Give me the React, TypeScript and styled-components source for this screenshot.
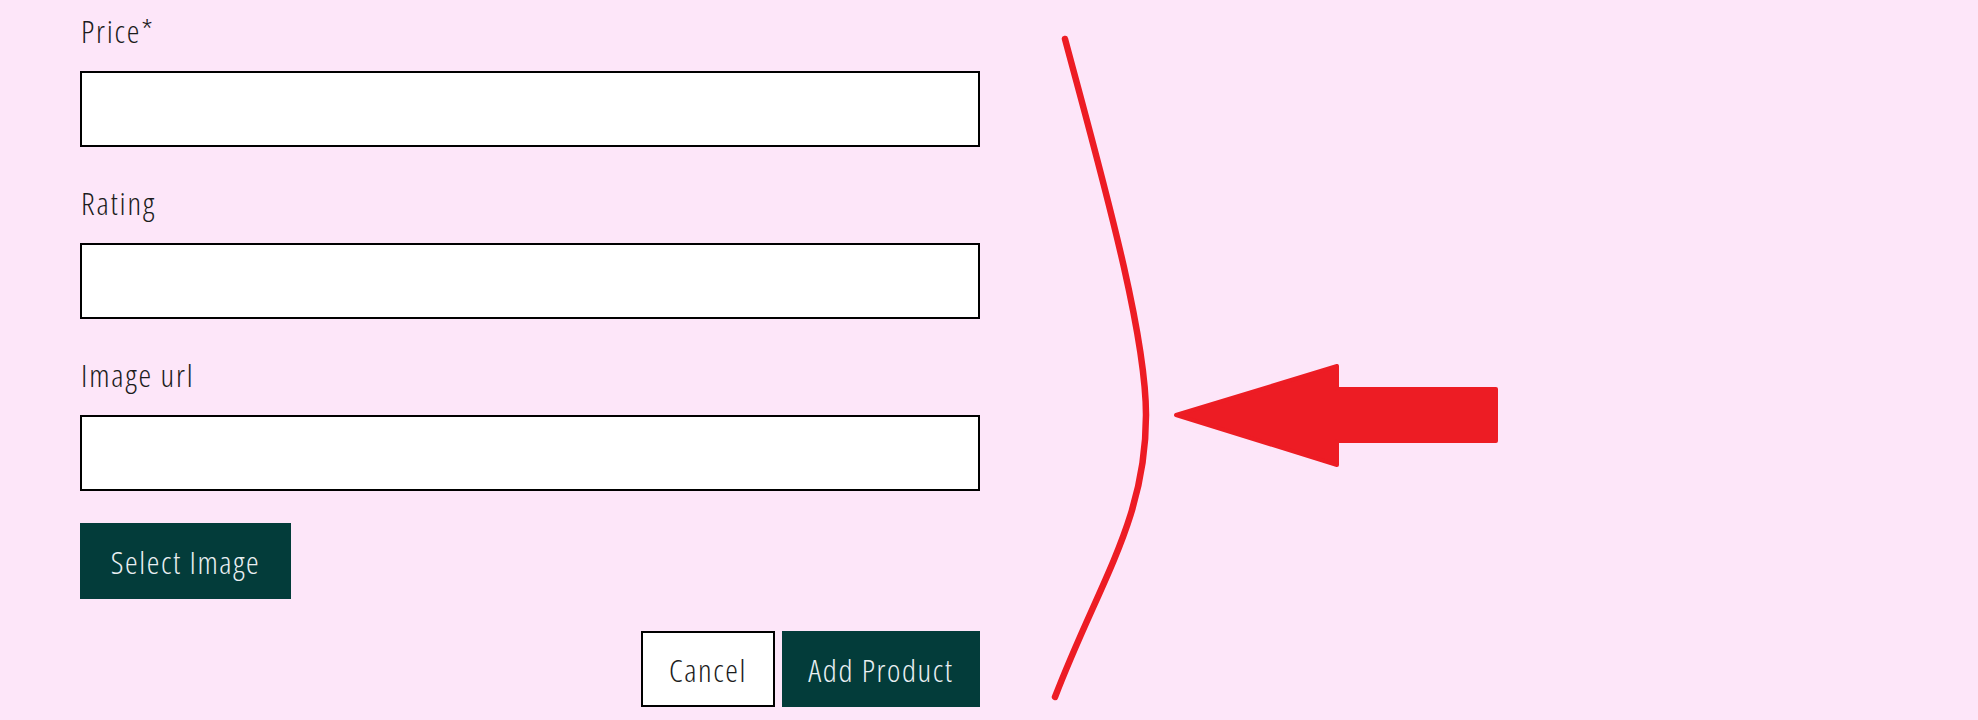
//#region Import
import React from 'react';
import styled, { createGlobalStyle } from 'styled-components';
//#endregion

// #region Styled
const GlobalStyle = createGlobalStyle`
  html, body {
    margin: 0;
    padding: 0;
    background: #fde6f9;
  }
  body {
    font-family: "Open Sans", "Liberation Sans", sans-serif;
    font-stretch: 75%;
    font-weight: 300;
  }
`;

const StyledPage = styled.div`
  display: flex;
  align-items: flex-start;
  width: 1978px;
  height: 720px;
  overflow: hidden;
  background: #fde6f9;
`;

const StyledForm = styled.form`
  display: flex;
  flex-direction: column;
  width: 900px;
  margin-left: 80px;
  padding-top: 13px;
`;

const StyledField = styled.div`
  display: flex;
  flex-direction: column;
  margin-bottom: 38px;
`;

const StyledLabel = styled.label`
  font-size: 32px;
  line-height: 36px;
  letter-spacing: 1.8px;
  color: #1c1c1c;
  margin-bottom: 22px;
  padding-left: 1px;
`;

const StyledInput = styled.input`
  box-sizing: border-box;
  width: 100%;
  height: 76px;
  border: 2px solid #000;
  background: #fff;
  font: inherit;
  font-size: 28px;
  padding: 0 12px;
  &:focus {
    outline: none;
  }
`;

const StyledButton = styled.button<{ $width: number; $variant?: 'primary' | 'outline' }>`
  box-sizing: border-box;
  display: block;
  width: ${(p) => p.$width}px;
  height: 76px;
  padding: 0;
  font-family: inherit;
  font-stretch: inherit;
  font-weight: inherit;
  font-size: 32px;
  letter-spacing: 1.6px;
  cursor: pointer;
  border: ${(p) => (p.$variant === 'outline' ? '2px solid #000' : 'none')};
  background: ${(p) => (p.$variant === 'outline' ? '#fff' : '#033c3a')};
  color: ${(p) => (p.$variant === 'outline' ? '#1c1c1c' : '#e9eff2')};
`;

const StyledUploadRow = styled.div`
  display: flex;
  margin-top: -6px;
`;

const StyledFooter = styled.div`
  display: flex;
  justify-content: flex-end;
  gap: 7px;
  margin-top: 32px;
`;

const StyledAnnotation = styled.svg`
  flex: none;
  margin-left: 60px;
  display: block;
`;
// #endregion

const fields = [
  { id: 'price', label: 'Price*' },
  { id: 'rating', label: 'Rating' },
  { id: 'image', label: 'Image url' },
];

const Annotation = () => (
  <StyledAnnotation width={470} height={720} viewBox="1040 0 470 720">
    <path
      d="M1065 39 C1100 170 1146 330 1146 415 C1146 520 1100 580 1055 697"
      fill="none"
      stroke="#ed1c24"
      strokeWidth={6.5}
      strokeLinecap="round"
    />
    <polygon
      points="1176,415 1337,366 1337,389 1496,389 1496,441 1337,441 1337,465"
      fill="#ed1c24"
      stroke="#ed1c24"
      strokeWidth={4}
      strokeLinejoin="round"
    />
  </StyledAnnotation>
);

export default function App() {
  return (
    <>
      <GlobalStyle />
      <StyledPage>
        <StyledForm onSubmit={(e) => e.preventDefault()}>
          {fields.map((f) => (
            <StyledField key={f.id}>
              <StyledLabel htmlFor={f.id}>{f.label}</StyledLabel>
              <StyledInput id={f.id} type="text" />
            </StyledField>
          ))}
          <StyledUploadRow>
            <StyledButton type="button" $width={211}>
              Select Image
            </StyledButton>
          </StyledUploadRow>
          <StyledFooter>
            <StyledButton type="button" $width={134} $variant="outline">
              Cancel
            </StyledButton>
            <StyledButton type="submit" $width={198}>
              Add Product
            </StyledButton>
          </StyledFooter>
        </StyledForm>
        <Annotation />
      </StyledPage>
    </>
  );
}
